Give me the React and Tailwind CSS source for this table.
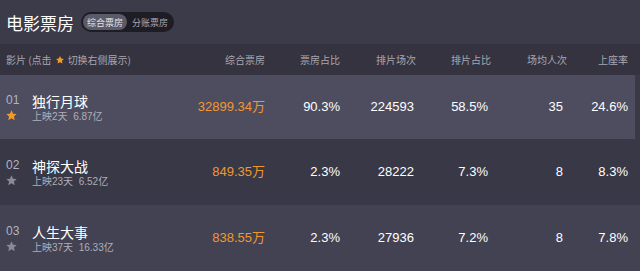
import React from 'react';

const rows = [
  { no: '01', name: '独行月球', sub: '上映2天', total: '6.87亿', box: '32899.34万', boxRate: '90.3%', shows: '224593', showRate: '58.5%', avg: '35', seat: '24.6%', active: true, bg: 'bg-[#4e4d60]' },
  { no: '02', name: '神探大战', sub: '上映23天', total: '6.52亿', box: '849.35万', boxRate: '2.3%', shows: '28222', showRate: '7.3%', avg: '8', seat: '8.3%', bg: 'bg-[#393846]' },
  { no: '03', name: '人生大事', sub: '上映37天', total: '16.33亿', box: '838.55万', boxRate: '2.3%', shows: '27936', showRate: '7.2%', avg: '8', seat: '7.8%', bg: 'bg-[#434252]' },
];

const Star = ({ className }) => (
  <svg viewBox="0 0 24 24" className={className} fill="currentColor">
    <path d="M12 2.5l2.9 6.1 6.6.8-4.9 4.6 1.3 6.6L12 17.3l-5.9 3.3 1.3-6.6L2.5 9.4l6.6-.8z" />
  </svg>
);

const cjk = { fontFamily: '"Noto Sans CJK SC", sans-serif' };

export default function App() {
  return (
    <div className="w-[640px] h-[271px] overflow-hidden bg-[#3c3b49] text-white" style={{ fontFamily: '"Liberation Sans", "Noto Sans CJK SC", sans-serif' }}>
      {/* title bar */}
      <div className="h-[44px] flex items-center pl-[6px] gap-[7px]">
        <h1 className="text-[17px] leading-none text-white" style={cjk}>电影票房</h1>
        <div className="flex items-center h-[20px] rounded-full bg-[#1e1d25] p-[2px] text-[9px] leading-none" style={cjk}>
          <span className="h-full flex items-center px-[4px] rounded-full bg-[#5b5a68] text-[#e6e5ea]">综合票房</span>
          <span className="h-full flex items-center pl-[5px] pr-[4px] text-[#a9a8b2]">分账票房</span>
        </div>
      </div>

      {/* header */}
      <div className="h-[31px] flex items-center pl-[6px] pr-[12px] bg-[#34333f] text-[10px] text-[#a8a7b1]" style={cjk}>
        <div className="flex-1 flex items-center">
          影片 (点击<Star className="w-[10px] h-[10px] mx-[3px] text-[#f59a23]" />切换右侧展示)
        </div>
        <div className="w-[100px] text-right">综合票房</div>
        <div className="w-[75px] text-right">票房占比</div>
        <div className="w-[74px] text-right"><span className="relative left-[2px]">排片场次</span></div>
        <div className="w-[74px] text-right"><span className="relative left-[3px]">排片占比</span></div>
        <div className="w-[75px] text-right"><span className="relative left-[4px]">场均人次</span></div>
        <div className="w-[65px] text-right">上座率</div>
      </div>

      {rows.map((r, i) => (
        <div key={r.no} className={`${i === 0 ? 'h-[64px]' : 'h-[66px]'} flex items-center pl-[6px] pr-[12px] ${r.bg} relative text-[13px]`}>
          {r.active && <div className="absolute right-0 top-0 bottom-0 w-[5px] bg-[#3a3946]" />}
          <div className="flex-1 flex items-center">
            <div className="w-[26px] flex flex-col items-start">
              <span className="text-[12px] leading-[14px] text-[#b4b3bd]">{r.no}</span>
              <Star className={`w-[13px] h-[13px] mt-[2px] ml-[-1px] ${r.active ? 'text-[#f59a23]' : 'text-[#8a8996]'}`} />
            </div>
            <div className="flex flex-col">
              <span className="text-[14px] leading-[18px] text-white" style={cjk}>{r.name}</span>
              <span className="text-[10px] leading-[12px] mt-[1px] text-[#aeadb8]">{r.sub}&nbsp;&nbsp;{r.total}</span>
            </div>
          </div>
          <div className="w-[100px] text-right text-[#f0982e]">{r.box}</div>
          <div className="w-[75px] text-right">{r.boxRate}</div>
          <div className="w-[74px] text-right">{r.shows}</div>
          <div className="w-[74px] text-right">{r.showRate}</div>
          <div className="w-[75px] text-right">{r.avg}</div>
          <div className="w-[65px] text-right">{r.seat}</div>
        </div>
      ))}
    </div>
  );
}
